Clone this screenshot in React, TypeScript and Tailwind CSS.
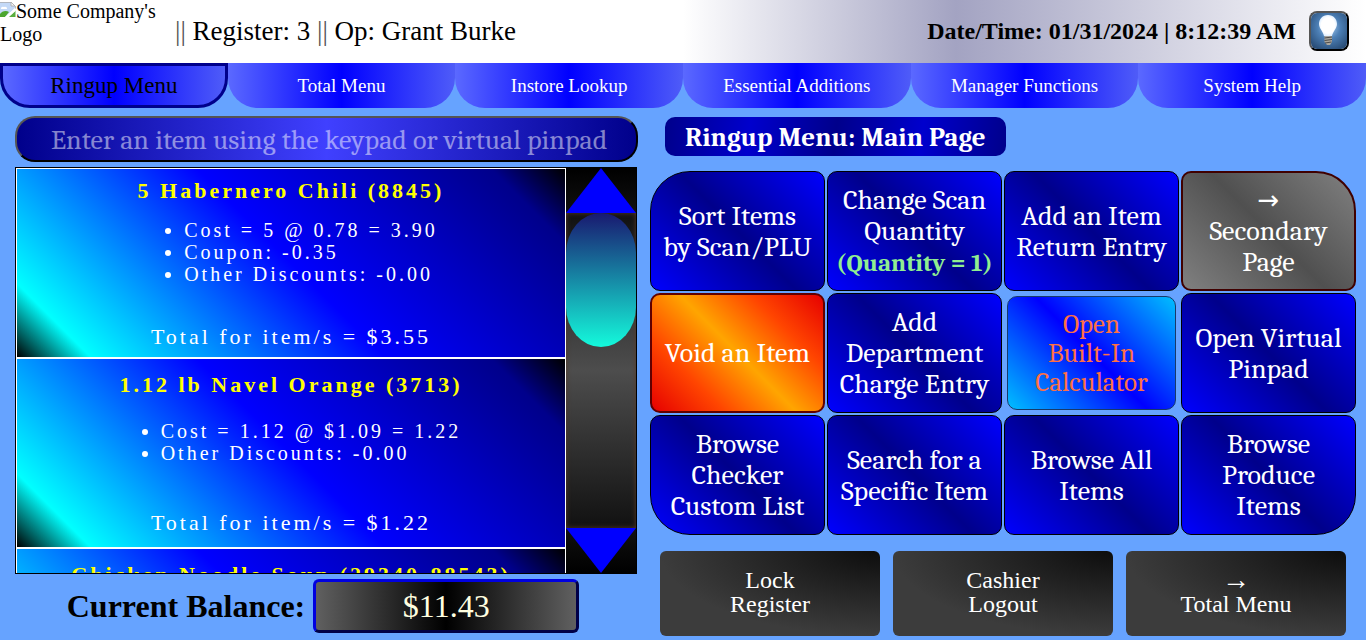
import type { ReactNode } from "react";

const TIMES = "font-['Times_New_Roman','Liberation_Serif',serif]";
const CAMBRIA = "font-[Cambria,Caladea,'Liberation_Serif',serif]";

const tabs = [
  "Ringup Menu",
  "Total Menu",
  "Instore Lookup",
  "Essential Additions",
  "Manager Functions",
  "System Help",
];

type Item = { title: string; lines: string[]; total?: string };

const items: Item[] = [
  {
    title: "5 Habernero Chili (8845)",
    lines: ["Cost = 5 @ 0.78 = 3.90", "Coupon: -0.35", "Other Discounts: -0.00"],
    total: "$3.55",
  },
  {
    title: "1.12 lb Navel Orange (3713)",
    lines: ["Cost = 1.12 @ $1.09 = 1.22", "Other Discounts: -0.00"],
    total: "$1.22",
  },
  { title: "Chicken Noodle Soup (29340-88543)", lines: [] },
];

const padText = "pt-px text-[28px] leading-[31px] text-white";
const padBlue = `${padText} rounded-[10px] border border-black bg-[linear-gradient(45deg,#0000ff,#00008b_50%,#0000ff)]`;

const pad: { label: ReactNode; look: string }[] = [
  { label: <>Sort Items<br />by Scan/PLU</>, look: `${padBlue} rounded-tl-[40px]` },
  {
    label: (
      <>
        Change Scan
        <br />
        Quantity
        <br />
        <b className="text-[25px] leading-[30px] text-[#90ee90]">(Quantity = 1)</b>
      </>
    ),
    look: padBlue,
  },
  { label: <>Add an Item<br />Return Entry</>, look: padBlue },
  {
    label: (
      <>
        <span className="font-['DejaVu_Sans',sans-serif] text-[26px] leading-[31px]">→</span>
        <br />
        Secondary
        <br />
        Page
      </>
    ),
    look: `${padText} rounded-[10px] rounded-tr-[40px] border-2 border-[#400000] bg-[linear-gradient(45deg,#808080,#505050_50%,#808080)]`,
  },
  {
    label: <>Void an Item</>,
    look: `${padText} rounded-[10px] border-2 border-[#600000] bg-[linear-gradient(45deg,#e60000,#ff4500_25%,#ffa500_50%,#ff4500_75%,#e60000)]`,
  },
  { label: <>Add<br />Department<br />Charge Entry</>, look: padBlue },
  {
    label: <>Open<br />Built-In<br />Calculator</>,
    look: "m-[3px] rounded-[10px] border border-[#173a6b] bg-[linear-gradient(45deg,#00bfff,#0000ff_50%,#00bfff)] pt-px text-[27px] leading-[29px] text-[#ff7043]",
  },
  { label: <>Open Virtual<br />Pinpad</>, look: padBlue },
  { label: <>Browse<br />Checker<br />Custom List</>, look: `${padBlue} rounded-bl-[40px]` },
  { label: <>Search for a<br />Specific Item</>, look: padBlue },
  { label: <>Browse All<br />Items</>, look: padBlue },
  { label: <>Browse<br />Produce<br />Items</>, look: `${padBlue} rounded-br-[40px]` },
];

const actions: ReactNode[] = [
  <>Lock<br />Register</>,
  <>Cashier<br />Logout</>,
  <>
    <span className="block h-6 text-[28px] leading-6">→</span>
    Total Menu
  </>,
];

function BrokenImage() {
  return (
    <svg className="inline-block size-4 align-baseline" viewBox="0 0 16 16" aria-hidden="true">
      <path d="M0 0h11l4 4v2L5 15H0z" fill="#c3d9f7" />
      <path d="M11 0v4h4z" fill="#f4f4f4" stroke="#a8a8a8" strokeWidth=".8" />
      <path d="M0 .4h11M15.5 4v3" stroke="#a8a8a8" strokeWidth=".8" />
      <path d="M1 7a2 2 0 0 1 3-2 2 2 0 0 1 3 2z" fill="#fff" />
      <path d="M0 14v-2c2-3 6-4 9-2l-4 5H0z" fill="#4ca62f" />
      <path d="M15.5 8.500V15H8z" fill="#5aae3e" />
      <path d="M5 15 15.500 6v3L9 15z" fill="#fff" />
    </svg>
  );
}

function Bulb() {
  return (
    <svg className="size-full" viewBox="0 0 36 36" aria-hidden="true">
      <defs>
        <radialGradient id="sky" cx=".5" cy=".4" r=".7">
          <stop offset="0" stopColor="#a9cdf0" />
          <stop offset=".45" stopColor="#4c7fb5" />
          <stop offset="1" stopColor="#274a73" />
        </radialGradient>
        <radialGradient id="glow">
          <stop offset=".75" stopColor="#fff" />
          <stop offset="1" stopColor="#e2f0ff" />
        </radialGradient>
      </defs>
      <rect width="36" height="36" fill="url(#sky)" />
      <path
        d="M17 2c-5.500 0-9 4-9 9 0 4.500 4 7 5 12h8c1-5 5-7.500 5-12 0-5-3.500-9-9-9z"
        fill="url(#glow)"
      />
      <path d="M13.500 23h7.500v6l-2 3h-3l-2.500-3z" fill="#a9a59d" />
      <path d="M13.500 25l7.500-1M13.500 27.500l7.500-1M14 30l6.500-1" stroke="#4d4b49" strokeWidth="1" />
    </svg>
  );
}

function Header() {
  return (
    <header className="flex h-[63px] items-center bg-white bg-[linear-gradient(90deg,#fff_50%,#a3a3c2_70%,#fff)] pb-0.5 text-black">
      <div className="w-[175px] self-start text-xl leading-[23px]">
        <div className="w-[160px]">
          <BrokenImage />
          Some Company's Logo
        </div>
      </div>
      <p className="flex-1 text-[27px] leading-8">
        <span className="text-[#555]">||</span> Register: 3 <span className="text-[#555]">||</span> Op:
        Grant Burke
      </p>
      <p className="text-2xl font-bold">Date/Time: 01/31/2024 | 8:12:39 AM</p>
      <button
        type="button"
        aria-label="Toggle light"
        className="mr-[17px] ml-[13px] size-10 overflow-hidden rounded-lg border-2 border-black border-t-[#555] border-l-[#555]"
      >
        <Bulb />
      </button>
    </header>
  );
}

function Tabs() {
  return (
    <nav className="grid grid-cols-6">
      {tabs.map((tab, i) => (
        <button
          key={tab}
          type="button"
          className={
            i === 0
              ? "h-[45px] rounded-b-[30px] border-3 border-[#00008b] bg-[linear-gradient(90deg,#5b69ff,#0000ff_50%,#4f5cf8)] pt-0.5 text-[23px] text-black"
              : "h-[45px] rounded-b-[30px] bg-[linear-gradient(90deg,#5b69ff,#0000ff_50%,#4f5cf8)] pt-0.5 text-[19px] text-white"
          }
        >
          {tab}
        </button>
      ))}
    </nav>
  );
}

function ItemCard({ item }: { item: Item }) {
  return (
    <li className="flex h-[190px] shrink-0 flex-col items-center justify-around border border-white bg-[linear-gradient(45deg,#000,#00ffff_10%,#0000ff_50%,#00008b_90%,#000)] pt-[3px] pb-0.5 tracking-[3px] text-white">
      <h2 className="mb-1 text-[22px] leading-[25px] font-bold text-[#ffff00]">{item.title}</h2>
      <ul className="mb-[26px] min-h-11 list-disc pl-10 text-xl leading-[22px]">
        {item.lines.map((line) => (
          <li key={line}>{line}</li>
        ))}
      </ul>
      <p className="min-h-[25px] text-[22px] leading-[25px]">
        {item.total && `Total for item/s = ${item.total}`}
      </p>
    </li>
  );
}

function ScrollRail() {
  return (
    <div className="flex w-[70px] flex-col bg-black">
      <button type="button" aria-label="Scroll up" className="h-[45px] bg-[linear-gradient(#000,#111)]">
        <svg className="size-full" viewBox="0 0 70 45" preserveAspectRatio="none">
          <path d="M35 0 70 45H0z" fill="#00f" />
        </svg>
      </button>
      <div className="flex-1 bg-[linear-gradient(#111,#4d4d4d_50%,#111)] shadow-[inset_0_0_5px_#5a3a28]">
        <div className="h-[134px] rounded-[35px/40px] bg-[linear-gradient(#191970,#14fadc)]" />
      </div>
      <button type="button" aria-label="Scroll down" className="h-[45px] bg-[linear-gradient(#111,#000)]">
        <svg className="size-full" viewBox="0 0 70 45" preserveAspectRatio="none">
          <path d="M0 0H70L35 45z" fill="#00f" />
        </svg>
      </button>
    </div>
  );
}

function Receipt() {
  return (
    <section>
      <input
        type="text"
        aria-label="Item entry"
        placeholder="Enter an item using the keypad or virtual pinpad"
        className={`${CAMBRIA} block h-[46px] w-full rounded-[20px] border-2 border-black border-t-[#555] border-l-[#555] bg-[linear-gradient(90deg,#00008b,#4040ff_50%,#00008b)] pt-0.5 pr-4 pl-[34px] text-[28px] text-white placeholder:text-white/50`}
      />
      <div className="mt-[5px] mr-px flex h-[407px] border border-black">
        <ul className="flex min-w-0 flex-1 flex-col overflow-hidden">
          {items.map((item) => (
            <ItemCard key={item.title} item={item} />
          ))}
        </ul>
        <ScrollRail />
      </div>
      <div className="mt-[5px] flex items-center justify-center gap-2 pr-[7px] text-[32px] leading-8">
        <span className="font-bold text-black">Current Balance:</span>
        <output className="flex h-[54px] w-[266px] items-center justify-center rounded-md border-3 border-t-[#0000e0] border-r-[#000048] border-b-[#000048] border-l-[#0000e0] bg-[linear-gradient(90deg,#606060,#000_50%,#606060)] text-[#ffffe0]">
          $11.43
        </output>
      </div>
    </section>
  );
}

function MenuPanel() {
  return (
    <section className="pt-px">
      <h1
        className={`${CAMBRIA} ml-[15px] flex h-[39px] w-fit items-center rounded-[10px] bg-[linear-gradient(97deg,#00008b,#0000cd_25%,#00008b_50%,#0000cd_75%,#00008b)] px-5 pt-[3px] text-[27px] font-bold text-white`}
      >
        Ringup Menu: Main Page
      </h1>
      <div className={`${CAMBRIA} mt-[15px] grid auto-rows-[120px] grid-cols-4 gap-0.5`}>
        {pad.map((entry, i) => (
          <button key={i} type="button" className={entry.look}>
            {entry.label}
          </button>
        ))}
      </div>
      <div className="mt-4 grid grid-cols-3 gap-[13px] px-2.5">
        {actions.map((label, i) => (
          <button
            key={i}
            type="button"
            className="h-[85px] rounded-md bg-[radial-gradient(100%_100%_at_100%_0,#0d0d0d_0,#3c3c3c_100%)] pb-1 text-2xl leading-6 text-white shadow-[rgba(45,35,66,0.4)_0_2px_4px,rgba(45,35,66,0.3)_0_7px_13px_-3px,rgba(58,65,111,0.5)_0_-3px_0_inset]"
          >
            {label}
          </button>
        ))}
      </div>
    </section>
  );
}

export default function App() {
  return (
    <div className={`${TIMES} min-h-screen bg-[#66a3ff]`}>
      <Header />
      <Tabs />
      <main className="grid grid-cols-[623fr_706fr] gap-3 pt-2 pr-2.5 pl-[15px]">
        <Receipt />
        <MenuPanel />
      </main>
    </div>
  );
}
